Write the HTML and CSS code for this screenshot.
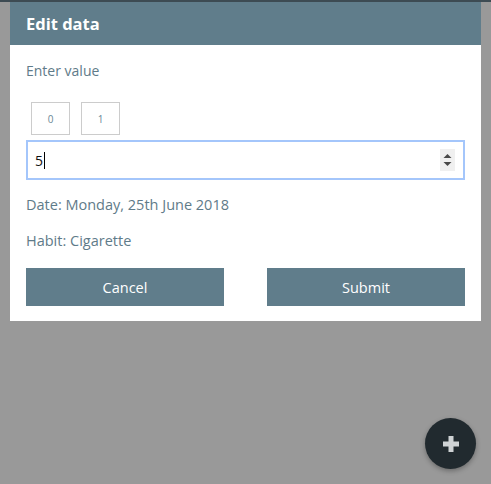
FILE: index.html
```html
<!DOCTYPE html>
<html>
<head>
<meta charset="utf-8">
<link rel="stylesheet" href="styles.css">
</head>
<body>
<div class="topbar"></div>
<div class="page">
  <div class="modal">
    <div class="modal-head">Edit data</div>
    <div class="modal-body">
      <div class="label">Enter value</div>
      <div class="quick">
        <span class="qbtn">0</span>
        <span class="qbtn">1</span>
      </div>
      <div class="field">
        <span class="value">5</span><span class="caret"></span>
        <span class="spin">
          <svg width="15" height="22" viewBox="0 0 15 22"><path d="M3.5 9 L7.5 5 L11.5 9 Z" fill="#4a4a4a"/><path d="M3.5 13 L11.5 13 L7.5 17 Z" fill="#4a4a4a"/></svg>
        </span>
      </div>
      <div class="info">Date: Monday, 25th June 2018</div>
      <div class="info">Habit: Cigarette</div>
      <div class="actions">
        <button class="btn">Cancel</button>
        <button class="btn">Submit</button>
      </div>
    </div>
  </div>
</div>
<div class="fab">
  <svg width="20" height="20" viewBox="0 0 20 20"><path d="M7.5 2h5v5.5h5.5v5h-5.5v5.5h-5v-5.5h-5.5v-5h5.5z" fill="#cfd3d5"/></svg>
</div>
</body>
</html>
```

FILE: styles.css
```css
* { box-sizing: border-box; }
html, body { margin: 0; padding: 0; }
body {
  width: 491px;
  height: 484px;
  background: #999999;
  font-family: "Open Sans", "DejaVu Sans", sans-serif;
  overflow: hidden;
  position: relative;
}
.topbar { height: 2px; background: #3d4b53; }
.page { padding: 0 10px; }
.modal { background: #ffffff; height: 319px; }
.modal-head {
  height: 43px;
  background: #607d8b;
  color: #ffffff;
  font-weight: bold;
  font-size: 16.5px;
  padding: 10px 16px 0;
}
.modal-body { padding: 16px 16px 0; color: #5f7b89; }
.label { font-size: 14px; line-height: 20px; }
.quick { display: flex; gap: 11px; padding: 21px 0 0 5px; }
.qbtn {
  width: 39px; height: 33px;
  border: 1px solid #cccccc;
  display: flex; align-items: center; justify-content: center;
  font-size: 10px; color: #6b8796;
}
.field {
  margin-top: 5px;
  height: 40px;
  border: 2px solid #a4c6fb;
  display: flex; align-items: center;
  padding-left: 7px; padding-right: 8px;
  color: #111;
  font-size: 14px;
}
.caret { display: inline-block; width: 1px; height: 17px; background: #000; margin-left: 1px; }
.spin {
  margin-left: auto;
  width: 15px; height: 22px;
  background: #f0f0f0;
  display: block;
}
.spin svg { display: block; }
.info { font-size: 14.5px; line-height: 20px; margin-top: 15px; }
.info + .info { margin-top: 16px; }
.actions { display: flex; justify-content: space-between; margin-top: 17px; }
.btn {
  width: 198px; height: 38px;
  background: #607d8b; color: #ffffff;
  border: none; font-family: inherit; font-size: 14.5px;
  padding: 0;
}
.fab {
  position: absolute; left: 425px; top: 418px;
  width: 51px; height: 51px; border-radius: 50%;
  background: #212a2f;
  display: flex; align-items: center; justify-content: center;
  box-shadow: 0 2px 5px rgba(0,0,0,0.3);
}
.fab svg { display: block; }
```
